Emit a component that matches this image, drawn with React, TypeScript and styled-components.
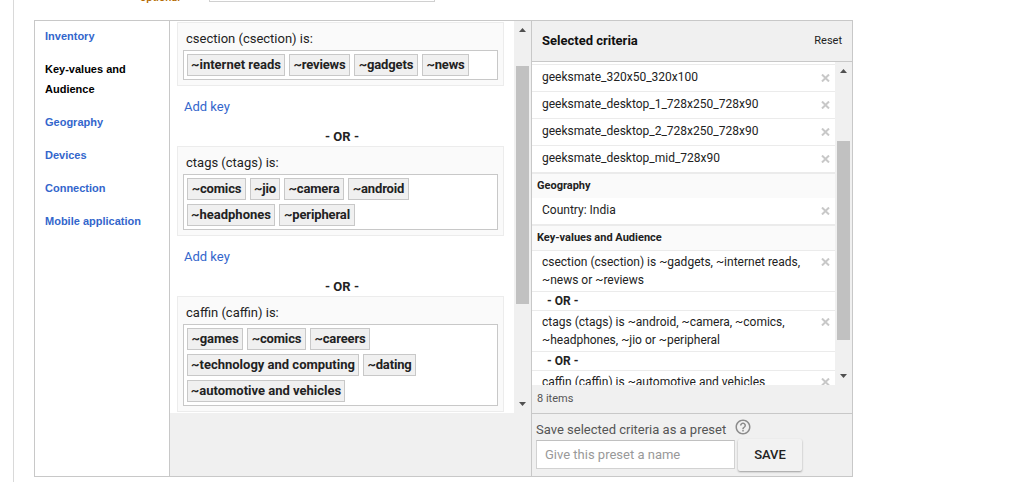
import React from "react";
import styled, { createGlobalStyle, css } from "styled-components";
import { MdHelpOutline } from "react-icons/md";

const GlobalStyle = createGlobalStyle`
  *, *::before, *::after { box-sizing: border-box; }
  html, body { margin: 0; padding: 0; background: #fff; overflow: hidden; }
  body { font-family: Roboto, "Liberation Sans", sans-serif; font-size: 13px; color: #222; }
`;

const Page = styled.div`
  width: 1011px;
  height: 482px;
  padding-left: 13px;
  overflow: hidden;
`;

const Sheet = styled.main`
  height: 482px;
  border-left: 1px solid #d9d9d9;
  padding-left: 20px;
`;

const PreviousField = styled.div`
  display: flex;
  height: 20px;
  padding-left: 106px;
  overflow: hidden;
`;

const OptionalTag = styled.span`
  width: 69px;
  margin-top: -10px;
  font-size: 11px;
  font-weight: 500;
  line-height: 16px;
  color: #b36b00;
`;

const PreviousInput = styled.div`
  width: 226px;
  height: 2px;
  border: 1px solid #d0d0d0;
  border-top: 0;
`;

const Picker = styled.section`
  display: flex;
  width: 819px;
  height: 457px;
  border: 1px solid #c8c8c8;
  background: #f0f0f0;
`;

const Nav = styled.nav`
  display: flex;
  flex-direction: column;
  gap: 13px;
  width: 135px;
  padding: 5px 10px;
  border-right: 1px solid #c8c8c8;
  background: #fff;
`;

const NavLink = styled.a<{ $active?: boolean }>`
  font: bold 11px/20px "Liberation Sans", Arial, sans-serif;
  color: ${(p) => (p.$active ? "#000" : "#3366cc")};
`;

const Editor = styled.div`
  display: flex;
  width: 361px;
  height: 392px;
`;

const EditorBody = styled.div`
  width: 344px;
  height: 392px;
  padding: 1px 10px 0 7px;
  background: #fff;
  overflow: hidden;
`;

const Group = styled.div`
  padding: 0 5px 5px;
  border: 1px solid #ececec;
  background: #fafafa;
`;

const GroupLabel = styled.div`
  height: 27px;
  padding: 2px 0 0 3px;
  line-height: 28px;
`;

const TokenBox = styled.div`
  display: flex;
  flex-wrap: wrap;
  gap: 4px;
  padding: 3px;
  border: 1px solid #c8c8c8;
  background: #fff;
`;

const Token = styled.span<{ $width: number }>`
  display: flex;
  justify-content: center;
  width: ${(p) => p.$width}px;
  height: 22px;
  border: 1px solid #c8c8c8;
  background: #f0f0f0;
  font-weight: 700;
  letter-spacing: ${(p) => (p.$width < 80 ? -0.15 : 0)}px;
  line-height: 19px;
  white-space: nowrap;
`;

const AddKey = styled.a`
  display: block;
  height: 41px;
  padding-left: 7px;
  line-height: 41px;
  color: #3366cc;
`;

const Divider = styled.div`
  height: 19px;
  padding-left: 3px;
  text-align: center;
  font-weight: 700;
  line-height: 20px;
`;

const ScrollTrack = styled.div`
  display: flex;
  flex-direction: column;
  align-items: center;
  width: 17px;
  background: #f0f0f0;
`;

const ScrollArrow = styled.svg`
  display: block;
  width: 17px;
  height: 17px;
  flex: none;
`;

const ScrollThumb = styled.div<{ $before: number; $size: number }>`
  width: 13px;
  height: ${(p) => p.$size}px;
  margin-top: ${(p) => p.$before}px;
  margin-bottom: auto;
  background: #c1c1c1;
`;

const Summary = styled.aside`
  display: flex;
  flex-direction: column;
  width: 321px;
  border-left: 1px solid #c8c8c8;
`;

const SummaryHeader = styled.header`
  display: flex;
  align-items: center;
  justify-content: space-between;
  height: 41px;
  padding: 0 10px 2px;
  border-bottom: 1px solid #c8c8c8;
`;

const SummaryTitle = styled.h2`
  margin: 0;
  font-size: 13px;
  font-weight: 700;
  color: #111;
`;

const Reset = styled.a`
  font-size: 11px;
  color: #222;
`;

const SummaryScroll = styled.div`
  display: flex;
  height: 323px;
`;

const SummaryList = styled.div`
  width: 303px;
  padding-top: 2px;
  background: #fff;
  overflow: hidden;
`;

const SectionTitle = styled.div`
  height: 26px;
  padding-left: 5px;
  border-top: 2px solid #ebebeb;
  background: #fafafa;
  font-size: 11px;
  font-weight: 700;
  line-height: 23px;
`;

const Criterion = styled.div<{ $tall?: boolean }>`
  display: flex;
  justify-content: space-between;
  height: 27px;
  padding: 3px 5px 0 10px;
  border-top: 1px solid #ebebeb;
  font-size: 12px;
  line-height: 18px;
  ${(p) =>
    p.$tall
      ? css`
          height: 41px;
          padding-top: 2px;
        `
      : css`
          ${SectionTitle} + & {
            height: 26px;
            border-top: 0;
          }
        `}
`;

const RemoveIcon = styled.svg<{ $tall?: boolean }>`
  width: 9px;
  height: 8px;
  margin-top: ${(p) => (p.$tall ? 5 : 6)}px;
  flex: none;
  stroke: #c8c8c8;
  stroke-width: 2;
`;

const OrRow = styled.div`
  height: 19px;
  padding-left: 15px;
  border-top: 1px solid #ebebeb;
  font-size: 12px;
  font-weight: 700;
  line-height: 18px;
`;

const Count = styled.div`
  height: 29px;
  padding-left: 5px;
  border-bottom: 1px solid #c8c8c8;
  font-size: 11px;
  line-height: 27px;
  color: #555;
`;

const Preset = styled.div`
  padding-left: 4px;
`;

const PresetLabel = styled.label`
  display: flex;
  align-items: flex-start;
  gap: 8px;
  height: 25px;
  line-height: 31px;
  color: #555;

  svg { margin-top: 4px; color: #8c8c8c; }
`;

const PresetForm = styled.div`
  display: flex;
  gap: 3px;
`;

const PresetInput = styled.input`
  width: 199px;
  height: 29px;
  margin-top: 1px;
  padding: 0 8px;
  border: 1px solid #d2d2d2;
  border-top-color: #c0c0c0;
  border-radius: 0;
  background: #fff;
  font: 13px Roboto, sans-serif;

  &::placeholder { color: #999; opacity: 1; }
`;

const SaveButton = styled.button`
  width: 64px;
  height: 32px;
  padding: 0 0 2px;
  border: 0;
  border-radius: 2px;
  background: #f2f2f2;
  box-shadow: 0 1px 2px rgba(0, 0, 0, 0.35);
  font: 500 13px Roboto, sans-serif;
  color: #222;
`;

type TokenData = [text: string, width: number];

const GROUPS: { label: string; tokens: TokenData[] }[] = [
  {
    label: "csection (csection) is:",
    tokens: [["~internet reads", 98], ["~reviews", 61], ["~gadgets", 64], ["~news", 47]],
  },
  {
    label: "ctags (ctags) is:",
    tokens: [["~comics", 59], ["~jio", 30], ["~camera", 60], ["~android", 61], ["~headphones", 88], ["~peripheral", 76]],
  },
  {
    label: "caffin (caffin) is:",
    tokens: [
      ["~games", 56],
      ["~comics", 59],
      ["~careers", 60],
      ["~technology and computing", 172],
      ["~dating", 53],
      ["~automotive and vehicles", 158],
    ],
  },
];

const PLACEMENTS = [
  "geeksmate_320x50_320x100",
  "geeksmate_desktop_1_728x250_728x90",
  "geeksmate_desktop_2_728x250_728x90",
  "geeksmate_desktop_mid_728x90",
];

function Scrollbar({ before, size }: { before: number; size: number }) {
  return (
    <ScrollTrack>
      <ScrollArrow viewBox="0 0 17 17"><path d="M5 11h7L8.5 7z" fill="#505050" /></ScrollArrow>
      <ScrollThumb $before={before} $size={size} />
      <ScrollArrow viewBox="0 0 17 17"><path d="M5 6h7L8.5 10z" fill="#505050" /></ScrollArrow>
    </ScrollTrack>
  );
}

function Item({ lines }: { lines: string[] }) {
  const tall = lines.length > 1;
  return (
    <Criterion $tall={tall}>
      <div>{lines.map((line) => <div key={line}>{line}</div>)}</div>
      <RemoveIcon $tall={tall} viewBox="0 0 9 8"><path d="M1 .5l7 7M8 .5l-7 7" /></RemoveIcon>
    </Criterion>
  );
}

export default function App() {
  return (
    <>
      <GlobalStyle />
      <Page>
        <Sheet>
          <PreviousField>
            <OptionalTag>optional</OptionalTag>
            <PreviousInput />
          </PreviousField>
          <Picker>
            <Nav>
              <NavLink>Inventory</NavLink>
              <NavLink $active>Key-values and Audience</NavLink>
              <NavLink>Geography</NavLink>
              <NavLink>Devices</NavLink>
              <NavLink>Connection</NavLink>
              <NavLink>Mobile application</NavLink>
            </Nav>
            <Editor>
              <EditorBody>
                {GROUPS.map((group, i) => (
                  <React.Fragment key={group.label}>
                    {i > 0 && <Divider>- OR -</Divider>}
                    <Group>
                      <GroupLabel>{group.label}</GroupLabel>
                      <TokenBox>
                        {group.tokens.map(([text, width]) => (
                          <Token key={text} $width={width}>{text}</Token>
                        ))}
                      </TokenBox>
                    </Group>
                    {i < GROUPS.length - 1 && <AddKey>Add key</AddKey>}
                  </React.Fragment>
                ))}
              </EditorBody>
              <Scrollbar before={28} size={238} />
            </Editor>
            <Summary>
              <SummaryHeader>
                <SummaryTitle>Selected criteria</SummaryTitle>
                <Reset>Reset</Reset>
              </SummaryHeader>
              <SummaryScroll>
                <SummaryList>
                  {PLACEMENTS.map((p) => <Item key={p} lines={[p]} />)}
                  <SectionTitle>Geography</SectionTitle>
                  <Item lines={["Country: India"]} />
                  <SectionTitle>Key-values and Audience</SectionTitle>
                  <Item lines={["csection (csection) is ~gadgets, ~internet reads,", "~news or ~reviews"]} />
                  <OrRow>- OR -</OrRow>
                  <Item lines={["ctags (ctags) is ~android, ~camera, ~comics,", "~headphones, ~jio or ~peripheral"]} />
                  <OrRow>- OR -</OrRow>
                  <Item lines={["caffin (caffin) is ~automotive and vehicles", ""]} />
                </SummaryList>
                <Scrollbar before={62} size={199} />
              </SummaryScroll>
              <Count>8 items</Count>
              <Preset>
                <PresetLabel>
                  Save selected criteria as a preset
                  <MdHelpOutline size={18} />
                </PresetLabel>
                <PresetForm>
                  <PresetInput placeholder="Give this preset a name" />
                  <SaveButton>SAVE</SaveButton>
                </PresetForm>
              </Preset>
            </Summary>
          </Picker>
        </Sheet>
      </Page>
    </>
  );
}
